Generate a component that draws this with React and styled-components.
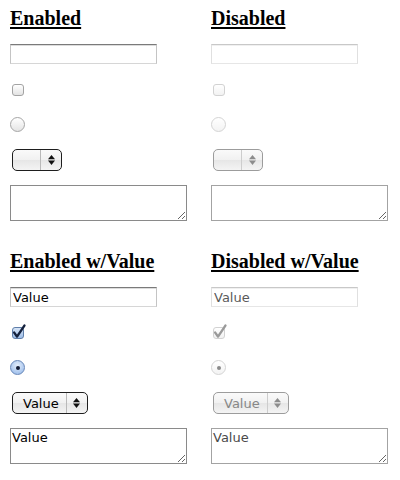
import styled, { createGlobalStyle } from 'styled-components';

const sections = [
	{ id: 'plain', titles: ['Enabled', 'Disabled'], value: '' },
	{ id: 'value', titles: ['Enabled w/Value', 'Disabled w/Value'], value: 'Value' },
];

function CheckMark({ disabled }) {
	return (
		<Mark width="14" height="15" viewBox="0 0 14 15">
			<path
				d="M2.2 8.6 L5 12.6 L12.4 1.6"
				fill="none"
				stroke={disabled ? '#9a9a9a' : '#14213d'}
				strokeWidth="2.4"
				strokeLinecap="round"
				strokeLinejoin="round"
			/>
		</Mark>
	);
}

function Arrows({ disabled }) {
	const fill = disabled ? '#8c8c8c' : '#111111';
	return (
		<svg width="7" height="10" viewBox="0 0 7 10">
			<path d="M3.5 0 L7 4.2 L0 4.2 Z" fill={fill} />
			<path d="M0 5.6 L7 5.6 L3.5 10 Z" fill={fill} />
		</svg>
	);
}

function Controls({ disabled, value }) {
	const filled = value !== '';
	return (
		<>
			<TextInput type="text" defaultValue={value} disabled={disabled} />
			<CheckBox $checked={filled} $disabled={disabled}>
				{filled ? <CheckMark disabled={disabled} /> : null}
			</CheckBox>
			<Radio $checked={filled} $disabled={disabled}>
				{filled ? <Dot $disabled={disabled} /> : null}
			</Radio>
			<Select $disabled={disabled}>
				<SelectValue>{value}</SelectValue>
				<SelectArrows $disabled={disabled}>
					<Arrows disabled={disabled} />
				</SelectArrows>
			</Select>
			<TextArea defaultValue={value} disabled={disabled} />
		</>
	);
}

export default function App() {
	return (
		<>
			<GlobalStyle />
			<Page>
				{sections.map((section, i) => (
					<Section key={section.id} $first={i === 0}>
						{section.titles.map((title, j) => (
							<Column key={title}>
								<Heading>{title}</Heading>
								<Controls disabled={j === 1} value={section.value} />
							</Column>
						))}
					</Section>
				))}
			</Page>
		</>
	);
}

const GlobalStyle = createGlobalStyle`
	* { box-sizing: border-box; }
	body {
		margin: 0;
		background: #ffffff;
	}
`;

const Page = styled.div`
	padding: 7px 10px 0;
	width: 400px;
`;

const Section = styled.div`
	display: grid;
	grid-template-columns: 201px 201px;
	margin-top: ${(p) => (p.$first ? '0' : '29px')};
`;

const Column = styled.div`
	display: flex;
	flex-direction: column;
	align-items: flex-start;
`;

const Heading = styled.h3`
	margin: 0;
	font-family: 'Liberation Serif', 'Times New Roman', serif;
	font-weight: bold;
	font-size: 20px;
	line-height: 23px;
	color: #000000;
	text-decoration: underline;
	text-underline-offset: 2px;
`;

const TextInput = styled.input`
	margin: 14px 0 0;
	width: 147px;
	height: 20px;
	padding: 0 2px;
	border: 1px solid ${(p) => (p.disabled ? '#e0e0e0' : '#c4c4c4')};
	border-top-color: ${(p) => (p.disabled ? '#c8c8c8' : '#7a7a7a')};
	border-bottom-color: ${(p) => (p.disabled ? '#e6e6e6' : '#d6d6d6')};
	box-shadow: inset 0 1px 0 ${(p) => (p.disabled ? '#f0f0f0' : '#dcdcdc')};
	background: #ffffff;
	font-family: 'DejaVu Sans', 'Liberation Sans', sans-serif;
	font-size: 13px;
	color: ${(p) => (p.disabled ? '#5a5a5a' : '#000000')};
	outline: none;
`;

const CheckBox = styled.span`
	position: relative;
	display: block;
	margin: 20px 0 0 2px;
	width: 12px;
	height: 12px;
	border-radius: 3px;
	border: 1px solid
		${(p) => (p.$disabled ? '#d2d2d2' : p.$checked ? '#5f7ea9' : '#a3a3a3')};
	background: ${(p) =>
		p.$disabled
			? 'linear-gradient(#ffffff, #f2f2f2)'
			: p.$checked
			? 'linear-gradient(#d6e4f6, #9dbde8)'
			: 'linear-gradient(#ffffff, #e3e3e3)'};
`;

const Mark = styled.svg`
	position: absolute;
	left: -1px;
	top: -4px;
`;

const Radio = styled.span`
	display: flex;
	align-items: center;
	justify-content: center;
	margin-top: 21px;
	width: 15px;
	height: 15px;
	border-radius: 50%;
	border: 1px solid
		${(p) => (p.$disabled ? '#d4d4d4' : p.$checked ? '#6787b8' : '#a5a5a5')};
	background: ${(p) =>
		p.$disabled
			? 'linear-gradient(#ffffff, #f3f3f3)'
			: p.$checked
			? 'radial-gradient(circle at 50% 35%, #e4eefb, #a9c6ee 70%, #8fb3e6)'
			: 'linear-gradient(#ffffff, #e4e4e4)'};
`;

const Dot = styled.span`
	width: 4px;
	height: 4px;
	border-radius: 50%;
	background: ${(p) => (p.$disabled ? '#8a8a8a' : '#111a33')};
`;

const Select = styled.div`
	display: flex;
	align-items: stretch;
	margin: 17px 0 0 2px;
	height: 22px;
	border: 1px solid ${(p) => (p.$disabled ? '#9c9c9c' : '#1e1e1e')};
	border-radius: 5px;
	overflow: hidden;
	background: linear-gradient(#fafafa, #f1f1f1 50%, #e6e6e6 51%, #f4f4f4);
	font-family: 'DejaVu Sans', 'Liberation Sans', sans-serif;
	font-size: 13px;
	color: ${(p) => (p.$disabled ? '#878787' : '#000000')};
`;

const SelectValue = styled.span`
	display: flex;
	align-items: center;
	min-width: 27px;
	padding: 0 7px 0 10px;
	white-space: nowrap;
`;

const SelectArrows = styled.span`
	display: flex;
	align-items: center;
	justify-content: center;
	width: 21px;
	border-left: 1px solid ${(p) => (p.$disabled ? '#cdcdcd' : '#b9b9b9')};
`;

const TextArea = styled.textarea`
	margin: 14px 0 0;
	width: 177px;
	height: 36px;
	padding: 1px 1px;
	border: 1px solid ${(p) => (p.disabled ? '#a3a3a3' : '#8a8a8a')};
	border-radius: 0;
	background: #ffffff;
	font-family: 'DejaVu Sans', 'Liberation Sans', sans-serif;
	font-size: 13px;
	line-height: 15px;
	color: ${(p) => (p.disabled ? '#4a4a4a' : '#000000')};
	resize: both;
	outline: none;
`;
